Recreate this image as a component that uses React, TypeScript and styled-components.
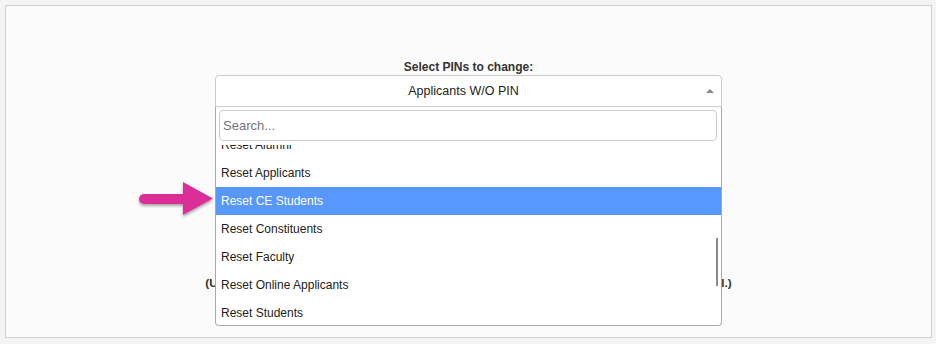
import { useLayoutEffect, useRef } from "react";
import styled, { createGlobalStyle } from "styled-components";

const GlobalStyle = createGlobalStyle`
  html, body {
    margin: 0;
    background: #f4f4f4;
    font-family: "Liberation Sans", Arial, sans-serif;
  }
`;

const Page = styled.main`
  padding: 5px;
`;

const Panel = styled.section`
  position: relative;
  box-sizing: border-box;
  width: 927px;
  height: 333px;
  border: 1px solid #cfcfcf;
  background: #fbfbfb;

  display: flex;
  flex-direction: column;
  align-items: center;
  padding-top: 54px;
`;

const Label = styled.label`
  font-size: 12px;
  font-weight: bold;
  color: #333;
  line-height: 15px;
`;

const SelectWrap = styled.div`
  position: relative;
  width: 507px;
`;

const Selection = styled.div`
  box-sizing: border-box;
  height: 32px;
  border: 1px solid #ccc;
  border-radius: 4px 4px 0 0;
  background: #fff;
  padding-right: 10px;

  display: flex;
  align-items: center;
  justify-content: center;

  font-size: 12.5px;
  color: #222;
`;

const Caret = styled.span`
  position: absolute;
  right: 8px;
  top: 14px;
  width: 0;
  height: 0;
  border-left: 4px solid transparent;
  border-right: 4px solid transparent;
  border-bottom: 4px solid #888;
`;

const Dropdown = styled.div`
  position: absolute;
  z-index: 2;
  top: 32px;
  left: 0;
  right: 0;
  box-sizing: border-box;
  border: 1px solid #aaa;
  border-top: none;
  border-radius: 0 0 4px 4px;
  background: #fff;
`;

const SearchBox = styled.div`
  padding: 3px 4px 4px 3px;
`;

const Search = styled.input`
  box-sizing: border-box;
  width: 100%;
  height: 31px;
  border: 1px solid #ccc;
  border-radius: 4px;
  padding: 0 3px;
  font-family: inherit;
  font-size: 13px;
  outline: none;

  &::placeholder {
    color: #757575;
  }
`;

const Results = styled.ul`
  list-style: none;
  margin: 0;
  padding: 0;
  height: 180px;
  overflow: hidden;
`;

const Option = styled.li<{ $active?: boolean }>`
  height: 28px;
  line-height: 28px;
  padding: 0 5px;
  font-size: 12px;
  color: ${(p) => (p.$active ? "#fff" : "#222")};
  background: ${(p) => (p.$active ? "#5897fb" : "transparent")};
`;

const Thumb = styled.div`
  position: absolute;
  right: 3px;
  top: 131px;
  width: 2px;
  height: 48px;
  background: #8a8a8a;
`;

const Hint = styled.p`
  margin: 169px 0 0;
  font-size: 11.8px;
  font-weight: bold;
  color: #333;
  white-space: nowrap;
`;

const Pointer = styled.svg`
  position: absolute;
  left: 131px;
  top: 169px;
  overflow: visible;
`;

const options = [
  "Reset Alumni",
  "Reset Applicants",
  "Reset CE Students",
  "Reset Constituents",
  "Reset Faculty",
  "Reset Online Applicants",
  "Reset Students",
];

export default function App() {
  const listRef = useRef<HTMLUListElement>(null);

  useLayoutEffect(() => {
    if (listRef.current) listRef.current.scrollTop = 14;
  }, []);

  return (
    <Page>
      <GlobalStyle />
      <Panel>
        <Label>Select PINs to change:</Label>
        <SelectWrap>
          <Selection>
            Applicants W/O PIN
            <Caret />
          </Selection>
          <Dropdown>
            <SearchBox>
              <Search placeholder="Search..." />
            </SearchBox>
            <Results ref={listRef}>
              {options.map((o) => (
                <Option key={o} $active={o === "Reset CE Students"}>
                  {o}
                </Option>
              ))}
            </Results>
            <Thumb />
          </Dropdown>
        </SelectWrap>
        <Hint>
          (Users in the selected group will have their PINs reset and the new PINs will be sent by email.)
        </Hint>
        <Pointer width="80" height="40" viewBox="0 0 80 40">
          <defs>
            <filter id="shadow" x="-20%" y="-30%" width="140%" height="170%">
              <feDropShadow dx="0" dy="2" stdDeviation="1.6" floodColor="#000" floodOpacity="0.35" />
            </filter>
          </defs>
          <g filter="url(#shadow)" fill="#dc2f98">
            <rect x="2" y="19" width="50" height="10" rx="5" />
            <polygon points="46,7 76,23.5 46,40" />
          </g>
        </Pointer>
      </Panel>
    </Page>
  );
}
